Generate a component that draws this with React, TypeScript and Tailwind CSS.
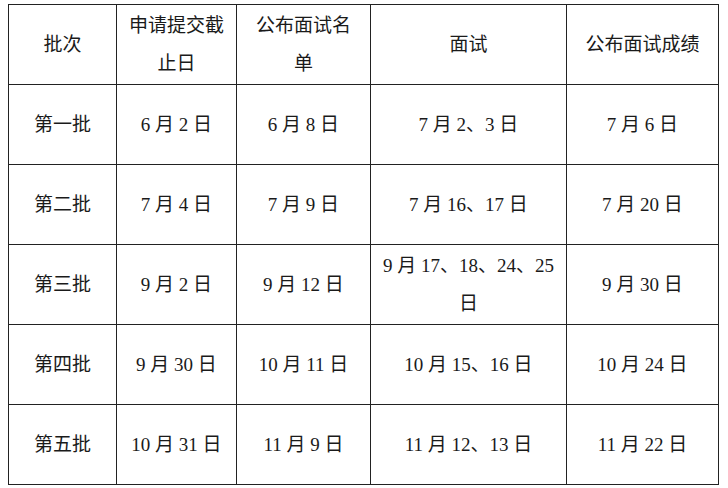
import React from "react";

const cols = ["w-[108px]", "w-[120px]", "w-[134px]", "w-[196px]", "w-[152px]"];

const header: React.ReactNode[] = [
  "批次",
  <>申请提交截<br />止日</>,
  <>公布面试名<br />单</>,
  "面试",
  "公布面试成绩",
];

const rows: React.ReactNode[][] = [
  ["第一批", "6 月 2 日", "6 月 8 日", "7 月 2、3 日", "7 月 6 日"],
  ["第二批", "7 月 4 日", "7 月 9 日", "7 月 16、17 日", "7 月 20 日"],
  ["第三批", "9 月 2 日", "9 月 12 日", <>9 月 17、18、24、25<br />日</>, "9 月 30 日"],
  ["第四批", "9 月 30 日", "10 月 11 日", "10 月 15、16 日", "10 月 24 日"],
  ["第五批", "10 月 31 日", "11 月 9 日", "11 月 12、13 日", "11 月 22 日"],
];

const Cell = ({ children, i }: { children: React.ReactNode; i: number }) => (
  <td
    className={`${cols[i]} h-[80px] border border-[#222] px-1 text-center align-middle leading-[38px]`}
  >
    {children}
  </td>
);

export default function App() {
  return (
    <div
      className="w-[728px] h-[488px] bg-white pl-[8px] pt-[4px] text-[19px] text-[#1a1a1a]"
      style={{ fontFamily: '"Liberation Serif", "Noto Sans CJK SC", serif' }}
    >
      <table className="border-collapse table-fixed">
        <tbody>
          <tr>
            {header.map((h, i) => (
              <Cell key={i} i={i}>
                {h}
              </Cell>
            ))}
          </tr>
          {rows.map((r, ri) => (
            <tr key={ri}>
              {r.map((c, i) => (
                <Cell key={i} i={i}>
                  {c}
                </Cell>
              ))}
            </tr>
          ))}
        </tbody>
      </table>
    </div>
  );
}
